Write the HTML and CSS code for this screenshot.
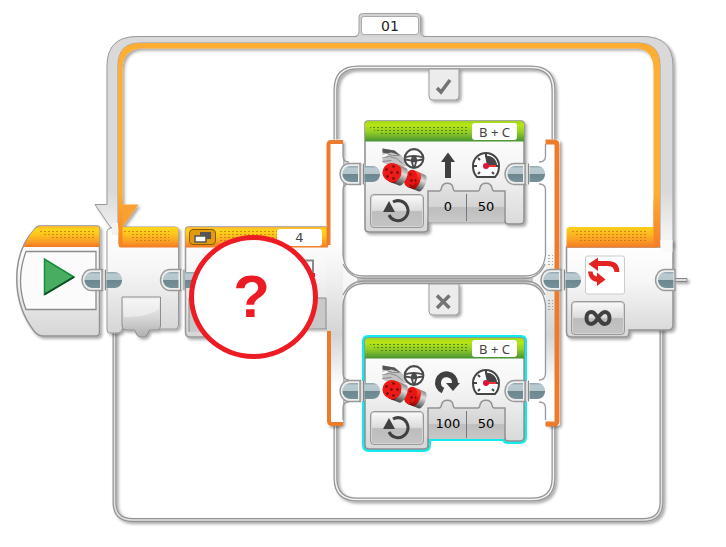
FILE: index.html
```
<!DOCTYPE html>
<html lang="en">
<head>
<meta charset="utf-8">
<title>Block program</title>
<link rel="stylesheet" href="styles.css">
</head>
<body>
<main class="canvas">
  <svg class="layer" width="726" height="547" viewBox="0 0 726 547" aria-hidden="true">
    <defs>
      <linearGradient id="amber" x2="0" y2="1"><stop offset="0" stop-color="#fbb03a"/><stop offset=".15" stop-color="#fdd51a"/><stop offset=".4" stop-color="#fdc51e"/><stop offset=".75" stop-color="#fb9c26"/><stop offset="1" stop-color="#f37a25"/></linearGradient>
      <linearGradient id="green" x2="0" y2="1"><stop offset="0" stop-color="#9fd520"/><stop offset=".2" stop-color="#b9e614"/><stop offset=".55" stop-color="#93cc26"/><stop offset="1" stop-color="#479334"/></linearGradient>
      <linearGradient id="body" x2="0" y2="1"><stop offset="0" stop-color="#fff"/><stop offset=".4" stop-color="#f6f6f6"/><stop offset="1" stop-color="#d6d6d6"/></linearGradient>
      <linearGradient id="pillar" x2="0" y2="1"><stop offset="0" stop-color="#fff"/><stop offset=".35" stop-color="#fff"/><stop offset=".5" stop-color="#eee"/><stop offset=".68" stop-color="#d4d4d4"/><stop offset=".86" stop-color="#fff"/><stop offset="1" stop-color="#fff"/></linearGradient>
      <linearGradient id="rail" gradientUnits="userSpaceOnUse" x1="0" y1="190" x2="0" y2="248"><stop offset="0" stop-color="#d9d9d9"/><stop offset="1" stop-color="#fafafa"/></linearGradient>
      <linearGradient id="strip" gradientUnits="userSpaceOnUse" x1="0" y1="190" x2="0" y2="247"><stop offset="0" stop-color="#ffae35"/><stop offset="1" stop-color="#f67f26"/></linearGradient>
      <linearGradient id="value" x2="0" y2="1"><stop offset="0" stop-color="#e4e4e4"/><stop offset=".6" stop-color="#d4d4d4"/><stop offset=".63" stop-color="#bebebe"/><stop offset="1" stop-color="#c8c8c8"/></linearGradient>
      <linearGradient id="plug" x2="0" y2="1"><stop offset="0" stop-color="#f0f0f0"/><stop offset=".5" stop-color="#d8d8d8"/><stop offset="1" stop-color="#aeafb1"/></linearGradient>
      <linearGradient id="joint" x2="0" y2="1"><stop offset="0" stop-color="#8da3ab"/><stop offset=".15" stop-color="#b9cad1"/><stop offset=".5" stop-color="#b4c5cc"/><stop offset=".52" stop-color="#6d878f"/><stop offset="1" stop-color="#76919a"/></linearGradient>
      <linearGradient id="steel" x2="0" y2="1"><stop offset="0" stop-color="#888"/><stop offset=".35" stop-color="#ddd"/><stop offset="1" stop-color="#444"/></linearGradient>
      <linearGradient id="red" x2="0" y2="1"><stop offset="0" stop-color="#ff4a3a"/><stop offset=".5" stop-color="#e81410"/><stop offset="1" stop-color="#8a0808"/></linearGradient>
      <pattern id="dots" width="4" height="3" patternUnits="userSpaceOnUse"><rect width="2" height="1" fill="#b65d08" opacity=".6"/></pattern>
      <pattern id="gdots" width="4" height="3" patternUnits="userSpaceOnUse"><rect width="2" height="1" fill="#3e7b12" opacity=".85"/></pattern>
      <filter id="drop" x="-10%" y="-10%" width="125%" height="125%"><feDropShadow dx="2" dy="2" stdDeviation="1.5" flood-color="#000" flood-opacity=".35"/></filter>

      <symbol id="connector" overflow="visible">
        <path d="M-1-10.500H-12C-18-10.500-21.500-5-21.500 0S-18 10.500-12 10.500H-1Z" fill="#eee" stroke="#999" stroke-width="1.500"/>
        <path d="M-1-10H3V10H-1Z" fill="#ddd"/>
        <path d="M-1.500-10.500V10.500M2-10.500V10.500" stroke="#888"/>
        <path d="M-3.500-8H-11C-16-8-19-4-19 0S-16 8-11 8H-3.500Z" fill="url(#joint)"/>
        <path d="M3-8H11C16-8 18.500-4 18.500 0S16 8 11 8H3Z" fill="url(#joint)"/>
      </symbol>
      <symbol id="repeat" overflow="visible"><path d="M-5-9A10 10 0 1 1-9 4" fill="none" stroke="#404040" stroke-width="3"/><path d="M-15 1 -9-10 -3 1Z" fill="#404040"/></symbol>
      <symbol id="gauge" overflow="visible">
        <path d="M-9 11Q-13 7-13 0A13 13 0 0 1 13 0Q13 7 9 11Z" fill="#fff" stroke="#444" stroke-width="2"/>
        <path d="M1-1-1-10A10 10 0 0 1 11-1Z" fill="#444"/>
        <path d="M-12 0H-9M-8-8 -6-6M0-12V-9M9 0H12M-8 8-6 6M8 8 6 6" stroke="#444" stroke-width="2"/>
        <path d="M0 0H10" stroke="#e33" stroke-width="2"/><circle r="3" fill="#e01238"/>
      </symbol>
      <symbol id="motors" overflow="visible">
        <path d="M0 0 12 2 19 7 25 17 14 20 0 14Z" fill="#c4c4c4"/><path d="M0 0 12 2 18 7 9 4 4 5 0 4Z" fill="#555"/><path d="M0 9 7 8 14 10 20 15M4 5 10 7 17 7M0 13 9 12" fill="none" stroke="#888"/><path d="M0 8 5 6" stroke="#fff" stroke-width="2"/>
        <g transform="rotate(22 28 30)"><path d="M28 21H40A4 9 0 0 1 40 39H28Z" fill="url(#steel)"/><path d="M28 21H34A4 9 0 0 1 34 39H28Z" fill="url(#red)"/><ellipse cx="28" cy="30" rx="6" ry="9" fill="#e81612"/></g>
        <g transform="rotate(22 9.500 24)"><path d="M10 14.500H21A4 9.500 0 0 1 21 33.500H10Z" fill="url(#steel)"/><path d="M10 14.500H14A4 9.500 0 0 1 14 33.500H10Z" fill="url(#red)"/><circle cx="9.500" cy="24" r="9.500" fill="#ed1b16"/></g>
        <g fill="#6b0a0a"><circle cx="9" cy="24" r="1.200"/><circle cx="4" cy="21" r="1.200"/><circle cx="11" cy="18" r="1.200"/><circle cx="5" cy="28" r="1.200"/><circle cx="11" cy="30" r="1.200"/><circle cx="15" cy="24" r="1.200"/><circle cx="29" cy="32" r="1.200"/><circle cx="28" cy="26" r="1"/><circle cx="28" cy="37" r="1"/><circle cx="33" cy="32" r="1"/></g>
        <circle cx="31.500" cy="10" r="9.300" fill="#fff" stroke="#4b4b4b" stroke-width="2.200"/><path d="M22 9Q31 6 41 9M23 11 29 12 31 19M40 11 34 12 32 19" fill="none" stroke="#4b4b4b" stroke-width="1.800"/><circle cx="31.500" cy="11" r="3" fill="#4b4b4b"/>
      </symbol>
      <path id="moveshape" d="M0 3Q0 0 3 0H156Q159 0 159 3V99Q159 103 155 103H143Q140 103 140 100H63V107Q63 111 59 111H4Q0 111 0 107Z"/>
      <symbol id="move" overflow="visible">
        <use href="#moveshape" fill="url(#body)" stroke="#8e8e8e" stroke-width="1.500"/>
        <path d="M63 70H74Q76 70 76.500 67C77.500 60.500 87.500 60.500 88 67Q88.500 70 90 70H113Q114.500 70 115 67C116 60.500 126 60.500 127 67Q127.500 70 129 70H140V101H63Z" fill="url(#value)"/>
        <path d="M63 110V70H74Q76 70 76.500 67C77.500 60.500 87.500 60.500 88 67Q88.500 70 90 70H113Q114.500 70 115 67C116 60.500 126 60.500 127 67Q127.500 70 129 70H140V102" fill="none" stroke="#929292" stroke-width="1.500"/>
        <path d="M101.500 73V100" stroke="#777"/>
        <path d="M0 20.500V3Q0 0 3 0H156Q159 0 159 3V20.500Z" fill="url(#green)"/>
        <path d="M5 5H104V14H14V11H9V8H5Z" fill="url(#gdots)"/>
        <use href="#motors" x="17.500" y="27.500"/><use href="#gauge" x="121" y="45"/>
      </symbol>
    </defs>

    <!-- return wire of the loop -->
    <path d="M114.500 325V502Q114.500 520 132.500 520H643Q661.500 520 661.500 502V325" fill="none" stroke="#949494" stroke-width="4" filter="url(#drop)"/>
    <path d="M114.500 325V502Q114.500 520 132.500 520H643Q661.500 520 661.500 502V325" fill="none" stroke="#e2e2e2" stroke-width="1.500"/>

    <!-- loop rail -->
    <g filter="url(#drop)">
      <path d="M355 36.500Q359 36 359 32V17Q359 13.500 362.500 13.500H417Q420.500 13.500 420.500 17V32Q420.500 36 425 36.500Z" fill="#d2d2d2" stroke="#a4a4a4"/>
      <path d="M107 204.500V66Q107 36.500 137 36.500H643Q673 36.500 673 66V246H660V66Q660 43 638 43H140Q118 43 118 66V228H111L95 204.500Z" fill="url(#rail)" stroke="#999"/>
      <path d="M118 248V66Q118 43 140 43H638Q660 43 660 66V246H653.500V70Q653.500 48.500 635 48.500H143Q122.500 48.500 122.500 70V248Z" fill="url(#strip)"/>
      <path d="M119 200H122.500V204.500H138.500L122 228H119Z" fill="#f9a032"/>
    </g>
    <path d="M357 37H423" stroke="#d6d6d6" stroke-width="2"/>

    <!-- case frames -->
    <g fill="none" stroke="#949494" stroke-width="4" filter="url(#drop)">
      <path d="M335.500 250V90Q335.500 67.500 358 67.500H531Q553.500 67.500 553.500 90V250"/>
      <path d="M335.500 310V478Q335.500 499.500 357 499.500H532Q553.500 499.500 553.500 478V310"/>
    </g>
    <g fill="none" stroke="#f2f2f2" stroke-width="1.500">
      <path d="M335.500 250V90Q335.500 67.500 358 67.500H531Q553.500 67.500 553.500 90V250"/>
      <path d="M335.500 310V478Q335.500 499.500 357 499.500H532Q553.500 499.500 553.500 478V310"/>
    </g>

    <!-- switch block and pillars -->
    <g filter="url(#drop)">
      <path d="M185.500 331V230Q185.500 227 188.500 227H327V328H240V337H190Q185.500 337 185.500 332Z" fill="url(#body)" stroke="#999" stroke-width="1.500"/>
      <path d="M326 143Q326 139.500 330 139.500H340Q343 139.500 343 143V422Q343 426 340 426H331Q327 426 327 422V328H326Z" fill="url(#pillar)"/>
      <path d="M545.500 143Q545.500 139.500 549 139.500H557Q560 139.500 560 143V422Q560 426 557 426H549Q545.500 426 545.500 422Z" fill="url(#pillar)"/>
    </g>
    <path d="M189 332V298H326V328" fill="#c9c9c9" stroke="#8b8b8b"/>
    <path d="M291 260.500H313V290" fill="#fff" stroke="#888" stroke-width="2"/><path d="M311 273H315V277H311Z" fill="#e9202a"/>
    <path d="M185.500 247.500V230Q185.500 227 189 227H328V247.500Z" fill="url(#amber)"/><path d="M219 231H277V242H219Z" fill="url(#dots)"/>
    <g fill="none" stroke-width="4">
      <path d="M343 142H331Q328.500 142 328.500 145V245" stroke="#ec7c2b"/>
      <path d="M329 331V421Q329 424 332 424H343" stroke="#ec7c2b"/>
      <path d="M545.500 142H554Q557 142 557 145V421Q557 424 554 424H545.500" stroke="#ec7c2b" stroke-width="5"/>
    </g>
    <path d="M343 276V256Q346 274 362 276.500H528Q543 274 545.500 256V303Q543 286 528 283H362Q346 286 343 303Z" fill="#f7f7f7"/>
    <path d="M357 277H533V283H357Z" fill="#c6c6c6"/>
    <g fill="none" stroke="#999" stroke-width="1.300">
      <path d="M343 144V156Q343 162 349 162M343 190Q343 184 349 184M343 190V255Q345 276 364 276H525Q543 276 545.500 255V190Q545.500 184 539 184M545.500 144V156Q545.500 162 539 162"/>
      <path d="M343 373Q343 380 349 380M343 373V305Q345 284 364 283.500H525Q543 284 545.500 305V373Q545.500 380 539 380M343 420V408Q343 402 349 402M545.500 420V408Q545.500 402 539 402"/>
      <path d="M343 264Q350 278 364 278.500H525Q539 278 545 264M343 295Q350 281 364 281H525Q539 281 545 295"/>
    </g>
    <path d="M548 253H553V265H548ZM548 298H553V310H548Z" fill="url(#gdots)" filter="grayscale(1)" opacity=".6"/>

    <!-- true / false tabs -->
    <g filter="url(#drop)" fill="#ececec" stroke="#999">
      <path d="M429 69V96Q429 100 433 100H455Q459 100 459 96V69Z"/>
      <path d="M429 284V311Q429 315 433 315H455Q459 315 459 311V284Z"/>
    </g>
    <path d="M437 88 441 92 450 80" fill="none" stroke="#747474" stroke-width="3.500"/>
    <path d="M437 295.500 449.500 308M449.500 295.500 437 308" stroke="#747474" stroke-width="3.500"/>

    <!-- start block -->
    <g filter="url(#drop)">
      <path d="M40 226H97Q99.500 226 99.500 229V332Q99.500 336 96 336H43Q38 336 34 331C11 301 11 255 34 230Q37 226 40 226Z" fill="url(#body)" stroke="#929292" stroke-width="1.500"/>
      <path d="M23.500 247Q28 236 35 229Q38 226 41 226H97Q99.500 226 99.500 229V247Z" fill="url(#amber)"/>
    </g>
    <path d="M26 251.500H96V309.500H26Q15 281 26 251.500Z" fill="#fbfbfb" stroke="#8c8c8c" stroke-width="1.300"/>
    <path d="M39 230H94V240H50V237H44V234H39Z" fill="url(#dots)"/>
    <path d="M44.500 259V294.500L74 277Z" fill="#48ad61" stroke="#168a3f" stroke-width="1.500"/><path d="M44.500 294.500 74 277" stroke="#0d4e25" stroke-width="2"/>

    <!-- loop start block -->
    <g filter="url(#drop)">
      <path d="M111 228Q107 229 107 231V330Q107 333 110 333H118Q122 333 122 329H161H175Q178.500 329 178.500 325V230Q178.500 227 175 227H122Z" fill="url(#body)" stroke="#999"/>
      <path d="M122 297H160.500V326Q160.500 330 157 330H150Q148.500 330 148 333C147 338.500 137 338.500 136 333Q135.500 330 134 330H126Q122 330 122 326Z" fill="url(#plug)" stroke="#8e8e8e"/>
    </g>
    <path d="M123.500 299H159V309Q149 317 123.500 317Z" fill="#fff" opacity=".45"/>
    <path d="M119 225H122.500V227H175Q178.500 227 178.500 230V247.500H121Q118.500 247.500 118.500 244V225Z" fill="url(#amber)"/>
    <path d="M112 223H118V235H112Z" fill="#f2f2f2"/><path d="M118.500 200H122.500V246L118.500 244Z" fill="url(#strip)"/>
    <path d="M123 231H169V241H134V238H130V234H123Z" fill="url(#dots)"/>

    <!-- loop end block -->
    <g filter="url(#drop)">
      <path d="M675 278.500H687V281.500H675Z" fill="#ddd" stroke="#888"/>
      <path d="M566.500 247H660L673 246V325Q673 330 668 330H629V333Q629 337 625 337H571Q566.500 337 566.500 332Z" fill="url(#body)" stroke="#939393" stroke-width="1.500"/>
      <path d="M660.500 240H672.500V252H660.500Z" fill="#fafafa"/>
    </g>
    <path d="M566.500 247.500V230Q566.500 227 570 227H654V220H660V244Q660 247.500 656 247.500Z" fill="url(#amber)"/><path d="M653.500 200H660V244Q660 247 656 247.500H653.500Z" fill="url(#strip)"/>
    <path d="M572 231H646V241H580V237H576V234H572Z" fill="url(#dots)"/>
    <rect x="585.500" y="256" width="39" height="38" rx="2" fill="#fff" stroke="#ccc"/>
    <path d="M588.500 264 598 257.500V261H608Q619 261 619.500 272H614.500Q614 266 608 266H598V271ZM588 271.500H592.500Q593 276 597 276.500V272.500L605.500 279.500 597 286V282Q589 281 588 271.500Z" fill="#e62323"/>

    <!-- move blocks -->
    <use href="#move" x="365" y="121" filter="url(#drop)"/>
    <path d="M445 178V162H441L448 152.500 455 162H451V178Z" fill="#404040"/>
    <use href="#moveshape" x="365" y="338" fill="none" stroke="#12ebed" stroke-width="6"/>
    <use href="#move" x="365" y="338"/>
    <path d="M443 390.500A8.500 8.500 0 1 1 455 383" fill="none" stroke="#404040" stroke-width="6"/><path d="M446 383H460L453 391Z" fill="#404040"/>

    <use href="#connector" x="103.500" y="280"/><use href="#connector" x="182" y="280"/><use href="#connector" x="562.500" y="280"/>
    <use href="#connector" x="361.500" y="174"/><use href="#connector" x="526.500" y="174"/>
    <use href="#connector" x="361.500" y="391"/><use href="#connector" x="526.500" y="391"/>
    <path d="M675 269.500H665C659 269.500 655.500 275 655.500 280S659 290.500 665 290.500H675Z" fill="#eee" stroke="#999" stroke-width="1.500"/><path d="M673.500 272H666C661 272 658 276 658 280S661 288 666 288H673.500Z" fill="url(#joint)"/>
  </svg>

  <input class="field field-loop" aria-label="Loop name" value="01">
  <button class="toggle" aria-label="Collapse switch"><svg width="18" height="12" viewBox="0 0 18 12"><path d="M6 1H17V8H6Z" fill="#555"/><path d="M1 5H12V11H1Z" fill="#fff" stroke="#555" stroke-width="1.500"/></svg></button>
  <input class="field field-port" aria-label="Sensor port" value="4">

  <section class="move move-true" aria-label="Move steering">
    <input class="field ports" aria-label="Motor ports" value="B + C">
    <div class="settings">
      <button class="mode" aria-label="Mode"><svg width="30" height="28" viewBox="-16 -14 30 28"><use href="#repeat"/></svg></button>
      <input class="number" aria-label="Steering" value="0"><input class="number" aria-label="Power" value="50">
    </div>
  </section>
  <section class="move move-false" aria-label="Move steering">
    <input class="field ports" aria-label="Motor ports" value="B + C">
    <div class="settings">
      <button class="mode" aria-label="Mode"><svg width="30" height="28" viewBox="-16 -14 30 28"><use href="#repeat"/></svg></button>
      <input class="number" aria-label="Steering" value="100"><input class="number" aria-label="Power" value="50">
    </div>
  </section>
  <button class="mode mode-loop" aria-label="Repeat forever"><svg width="28" height="18" viewBox="0 0 28 18"><path d="M14 9C10 3 9 3 7 3C1 3 1 15 7 15C11 15 12 12 14 9C16 6 18 3 21 3C27 3 27 15 21 15C18 15 17 13 14 9Z" fill="none" stroke="#404040" stroke-width="4"/></svg></button>

  <div class="question">?</div>
</main>
</body>
</html>
```
FILE: styles.css
```
* { box-sizing: border-box; }
body { margin: 0; background: #fff; }
.canvas { position: relative; min-height: 100vh; overflow: hidden; }
.layer { display: block; }
button, input { margin: 0; padding: 0; border: 0; }
button { display: flex; align-items: center; justify-content: center; }

.field, .number {
  text-align: center;
  font: 13px/16px "DejaVu Sans", sans-serif;
  color: #000;
}
.field { background: #fff; border-radius: 3px; color: #444; }
.field-loop {
  position: absolute; left: 361px; top: 16px;
  width: 58px; height: 19px;
  border: 1px solid #aaa; color: #222;
  font-size: 14px;
}
.field-port { position: absolute; left: 277px; top: 229px; width: 45px; height: 17px; }
.toggle {
  position: absolute; left: 189px; top: 229px;
  width: 27px; height: 16px;
  border: 1px solid #8c5a0c; border-radius: 4px;
  background: #e09c0c;
}

.move {
  position: absolute; left: 365px;
  display: flex; flex-direction: column; align-items: flex-end; justify-content: space-between;
  width: 159px; height: 107px;
  padding: 2px 0 0;
}
.move-true { top: 121px; }
.move-false { top: 338px; }
.ports { width: 45px; height: 17px; margin-right: 7px; font-family: "Noto Sans", sans-serif; }
.settings { display: flex; align-items: flex-start; align-self: stretch; padding-left: 5px; }
.mode {
  width: 54px; height: 34px;
  border: 1px solid #999; border-radius: 4px;
  background: linear-gradient(#fafafa, #dcdcdc 48%, #bdbdbd 52%, #c4c4c4);
  box-shadow: inset 0 0 0 1px #d4d4d4;
}
.number { width: 38px; height: 24px; background: transparent; }
.mode + .number { margin-left: 5px; }
.mode-loop { position: absolute; left: 571px; top: 301px; }

.question {
  position: absolute; left: 189px; top: 235px;
  display: flex; align-items: center; justify-content: center;
  width: 129px; height: 124px;
  padding-right: 4px;
  border: 5px solid #ed1c24; border-radius: 50%;
  background: #fff; color: #ed1c24;
  font: bold 60px/60px "Liberation Sans", sans-serif;
}
```
